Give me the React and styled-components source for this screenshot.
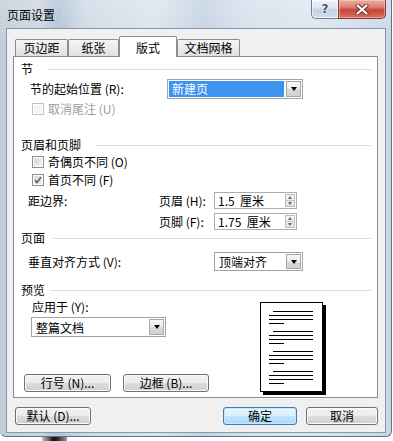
import styled, { createGlobalStyle } from 'styled-components';

const GlobalStyle = createGlobalStyle`
  html, body {
    margin: 0;
    padding: 0;
    background: #ffffff;
    overflow: hidden;
  }
  body {
    font-family: 'Noto Sans CJK SC', 'Noto Sans', sans-serif;
    font-size: 12px;
    color: #000;
  }
`;

const Window = styled.div`
  width: 392px;
  height: 437px;
  box-sizing: border-box;
  border-right: 1px solid #5f7288;
  border-bottom: 1px solid #5f7288;
  border-radius: 0 0 6px 6px;
  background:
    linear-gradient(180deg, rgba(255, 255, 255, 0.2) 0%, rgba(255, 255, 255, 0) 40px),
    linear-gradient(90deg, #c3cdd9 0%, #ccd6e2 10%, #b2c3d7 15%, #d0dbe7 22%, #dbe4ee 40%, #c4d2e2 52%, #d5e0ec 62%, #dde6f0 80%, #cad7e6 100%);
  display: flex;
  flex-direction: column;
  overflow: hidden;
`;

const TitleBar = styled.div`
  height: 28px;
  display: flex;
  justify-content: space-between;
  align-items: flex-start;
  padding-left: 7px;
`;

const Title = styled.div`
  margin-top: 8px;
  line-height: 14px;
  color: #000;
`;

const CaptionButtons = styled.div`
  display: flex;
  margin-right: 5px;
`;

const HelpButton = styled.div`
  box-sizing: border-box;
  width: 27px;
  height: 19px;
  border: 1px solid #6f8197;
  border-top: none;
  border-right: none;
  border-radius: 0 0 0 5px;
  background: linear-gradient(180deg, #eef3f9 0%, #dbe4ef 45%, #c5d2e2 55%, #d4dfec 100%);
  box-shadow: inset 0 0 0 1px rgba(255, 255, 255, 0.6);
  display: flex;
  align-items: center;
  justify-content: center;
  font-family: 'DejaVu Sans', sans-serif;
  font-weight: bold;
  font-size: 12px;
  color: #4a5568;
  text-shadow: 0 0 2px #fff, 0 0 1px #fff;
`;

const CloseButton = styled.div`
  box-sizing: border-box;
  width: 48px;
  height: 19px;
  border: 1px solid #7d3b33;
  border-top: none;
  border-radius: 0 0 5px 0;
  background: linear-gradient(180deg, #e9b2a6 0%, #d9806f 40%, #c64535 55%, #d7715f 100%);
  box-shadow: inset 0 0 0 1px rgba(255, 210, 200, 0.5);
  display: flex;
  align-items: center;
  justify-content: center;
`;

const Client = styled.div`
  box-sizing: border-box;
  margin-left: 6px;
  width: 380px;
  height: 405px;
  border: 1px solid #8799ae;
  background: #f0f0f0;
  padding: 7px 7px 0 6px;
  display: flex;
  flex-direction: column;
`;

const TabStrip = styled.div`
  display: flex;
  align-items: flex-end;
  height: 20px;
  padding-left: 2px;
`;

const Tab = styled.div`
  box-sizing: border-box;
  width: ${p => p.$w}px;
  height: ${p => (p.$active ? 21 : 17)}px;
  margin-bottom: ${p => (p.$active ? -1 : 0)}px;
  padding-top: ${p => (p.$active ? 2 : 0)}px;
  border: 1px solid #898c95;
  border-bottom: none;
  border-radius: 2px 2px 0 0;
  background: ${p => (p.$active ? '#ffffff' : 'linear-gradient(180deg, #f5f5f5 0%, #ebebeb 50%, #dfdfdf 100%)')};
  position: ${p => (p.$active ? 'relative' : 'static')};
  z-index: ${p => (p.$active ? 1 : 'auto')};
  display: flex;
  align-items: center;
  justify-content: center;
  line-height: 14px;
`;

const Panel = styled.div`
  box-sizing: border-box;
  height: 342px;
  border: 1px solid #898c95;
  background: #ffffff;
  padding: 5px 6px 0 7px;
  display: flex;
  flex-direction: column;
`;

const Heading = styled.div`
  display: flex;
  align-items: center;
  height: 14px;
  line-height: 14px;
  margin-top: ${p => p.$mt || 0}px;
`;

const Rule = styled.div`
  flex: 1;
  height: 1px;
  background: #d5dfe5;
  margin-left: ${p => p.$gap}px;
`;

const FieldRow = styled.div`
  display: flex;
  align-items: center;
  height: ${p => p.$h}px;
  margin-top: ${p => p.$mt || 0}px;
  padding-left: ${p => p.$pl || 0}px;
  line-height: 14px;
`;

const Label = styled.span`
  display: block;
  flex: 0 0 ${p => (p.$w ? `${p.$w}px` : 'auto')};
  height: 14px;
  line-height: 14px;
  color: ${p => (p.$disabled ? '#9d9d9d' : '#000')};
  white-space: nowrap;
`;

const CheckRow = styled.div`
  display: flex;
  align-items: center;
  height: ${p => p.$h || 15}px;
  margin-top: ${p => p.$mt || 0}px;
  padding-left: 11px;
`;

const CheckBox = styled.span`
  box-sizing: border-box;
  width: 12px;
  height: 12px;
  margin-right: 4px;
  border: 1px solid ${p => (p.$disabled ? '#c2c2c2' : '#8e8f8f')};
  background: ${p => (p.$disabled ? '#f4f4f4' : 'linear-gradient(135deg, #d6d6d6 0%, #f4f4f4 100%)')};
  box-shadow: inset 0 0 0 1px #ffffff;
  display: flex;
  align-items: center;
  justify-content: center;
`;

const SelectBox = styled.div`
  box-sizing: border-box;
  width: ${p => p.$w}px;
  height: ${p => p.$h}px;
  border: 1px solid #a3a3a3;
  background: #ffffff;
  padding: 1px;
  display: flex;
  align-items: stretch;
`;

const SelectValue = styled.div`
  flex: 1;
  margin-right: 2px;
  padding-left: 3px;
  display: flex;
  align-items: center;
  background: ${p => (p.$selected ? '#3d94f0' : 'transparent')};
  color: ${p => (p.$selected ? '#ffffff' : '#000')};
`;

const DropButton = styled.div`
  box-sizing: border-box;
  width: 15px;
  border: 1px solid #a7a7a7;
  background: linear-gradient(180deg, #f8f8f8 0%, #ececec 50%, #dadada 51%, #d0d0d0 100%);
  display: flex;
  align-items: center;
  justify-content: center;
`;

const DownArrow = styled.span`
  width: 0;
  height: 0;
  border-left: 3.5px solid transparent;
  border-right: 3.5px solid transparent;
  border-top: 4px solid #000;
`;

const MarginGrid = styled.div`
  display: grid;
  grid-template-columns: 131px 55px 83px;
  grid-auto-rows: 17px;
  row-gap: 4px;
  align-items: center;
  margin-top: 3px;
  padding-left: 7px;
  line-height: 14px;
`;

const SpinBox = styled.div`
  box-sizing: border-box;
  width: 83px;
  height: 17px;
  border: 1px solid #abadb3;
  background: #ffffff;
  padding: 1px;
  display: flex;
  align-items: stretch;
`;

const SpinText = styled.span`
  flex: 1;
  padding-left: 2px;
  display: flex;
  align-items: center;
  white-space: pre;
`;

const SpinButtons = styled.div`
  box-sizing: border-box;
  width: 10px;
  border: 1px solid #bdbdbd;
  background: linear-gradient(180deg, #f7f7f7 0%, #e3e3e3 100%);
  display: flex;
  flex-direction: column;
`;

const SpinHalf = styled.div`
  flex: 1;
  display: flex;
  align-items: center;
  justify-content: center;
  border-top: ${p => (p.$down ? '1px solid #c6c6c6' : 'none')};
`;

const SpinArrow = styled.span`
  width: 0;
  height: 0;
  border-left: 2.5px solid transparent;
  border-right: 2.5px solid transparent;
  border-bottom: ${p => (p.$down ? 'none' : '3px solid #6a6a6a')};
  border-top: ${p => (p.$down ? '3px solid #6a6a6a' : 'none')};
`;

const PreviewBody = styled.div`
  display: flex;
`;

const PreviewLeft = styled.div`
  flex: 0 0 239px;
  display: flex;
  flex-direction: column;
  align-items: flex-start;
`;

const ApplyLabel = styled.div`
  margin: 3px 0 0 11px;
  line-height: 14px;
`;

const SelectSlot = styled.div`
  margin: 3px 0 0 10px;
`;

const ActionRow = styled.div`
  display: flex;
  gap: 12px;
  margin: 37px 0 0 3px;
`;

const Button = styled.div`
  box-sizing: border-box;
  width: ${p => p.$w}px;
  height: 18px;
  border: 1px solid ${p => (p.$primary ? '#3c7fb1' : '#707070')};
  border-radius: 3px;
  background: ${p =>
    p.$primary
      ? 'linear-gradient(180deg, #eaf6fd 0%, #d9f0fc 50%, #bee6fd 51%, #a7d9f5 100%)'
      : 'linear-gradient(180deg, #f2f2f2 0%, #ebebeb 50%, #dddddd 51%, #cfcfcf 100%)'};
  box-shadow: inset 0 0 0 1px ${p => (p.$primary ? '#c5e7f9' : '#fbfbfb')};
  display: flex;
  align-items: center;
  justify-content: center;
  line-height: 14px;
  white-space: nowrap;
`;

const Page = styled.div`
  box-sizing: border-box;
  margin-top: 5px;
  width: 63px;
  height: 90px;
  border: 1px solid #000;
  background: #ffffff;
  box-shadow: 3px 3px 0 #000;
  padding: 8px 0 0 8px;
  display: flex;
  flex-direction: column;
  gap: 7px;
`;

const TextBlock = styled.div`
  display: flex;
  flex-direction: column;
  gap: 3px;
`;

const TextLine = styled.div`
  height: 1px;
  background: #000;
  width: ${p => p.$w}px;
  margin-left: ${p => p.$indent || 0}px;
`;

const BottomBar = styled.div`
  display: flex;
  justify-content: space-between;
  margin-top: 9px;
  padding-left: 2px;
`;

const ButtonGroup = styled.div`
  display: flex;
  gap: 9px;
`;

const Below = styled.div`
  height: 4px;
  padding-left: 42px;
`;

const Smudge = styled.div`
  width: 25px;
  height: 4px;
  background: linear-gradient(90deg, #c8c8c8 0%, #555 30%, #111 45%, #222 60%, #9a9a9a 100%);
`;

function Select({ w, h, value, selected }) {
  return (
    <SelectBox $w={w} $h={h}>
      <SelectValue $selected={selected}>{value}</SelectValue>
      <DropButton>
        <DownArrow />
      </DropButton>
    </SelectBox>
  );
}

function Spin({ value }) {
  return (
    <SpinBox>
      <SpinText>{value}</SpinText>
      <SpinButtons>
        <SpinHalf>
          <SpinArrow />
        </SpinHalf>
        <SpinHalf $down>
          <SpinArrow $down />
        </SpinHalf>
      </SpinButtons>
    </SpinBox>
  );
}

function Check({ checked, disabled, label }) {
  return (
    <>
      <CheckBox $disabled={disabled}>
        {checked && (
          <svg width="8" height="8" viewBox="0 0 8 8">
            <path d="M1 4.2 L3 6.4 L7 1.2" fill="none" stroke="#4b5f80" strokeWidth="1.6" />
          </svg>
        )}
      </CheckBox>
      <Label $disabled={disabled}>{label}</Label>
    </>
  );
}

function PreviewPage() {
  return (
    <Page>
      {[0, 1, 2, 3].map(i => (
        <TextBlock key={i}>
          <TextLine $w={40} $indent={4} />
          <TextLine $w={44} />
          <TextLine $w={44} />
          <TextLine $w={15} />
        </TextBlock>
      ))}
    </Page>
  );
}

export default function App() {
  return (
    <>
      <GlobalStyle />
      <Window>
        <TitleBar>
          <Title>页面设置</Title>
          <CaptionButtons>
            <HelpButton>?</HelpButton>
            <CloseButton>
              <svg width="14" height="11" viewBox="0 0 14 11">
                <path d="M2.5 1.5 L11.5 9.5 M11.5 1.5 L2.5 9.5" stroke="#6b2a24" strokeWidth="4" strokeLinecap="round" />
                <path d="M2.5 1.5 L11.5 9.5 M11.5 1.5 L2.5 9.5" stroke="#ffffff" strokeWidth="2.2" strokeLinecap="round" />
              </svg>
            </CloseButton>
          </CaptionButtons>
        </TitleBar>
        <Client>
          <TabStrip>
            <Tab $w={53}>页边距</Tab>
            <Tab $w={51}>纸张</Tab>
            <Tab $w={58} $active>版式</Tab>
            <Tab $w={63}>文档网格</Tab>
          </TabStrip>
          <Panel>
            <Heading>
              节<Rule $gap={14} />
            </Heading>
            <FieldRow $h={20} $mt={3} $pl={9}>
              <Label $w={137}>节的起始位置 (R):</Label>
              <Select w={136} h={20} value="新建页" selected />
            </FieldRow>
            <CheckRow $mt={2}>
              <Check disabled label="取消尾注 (U)" />
            </CheckRow>

            <Heading $mt={22}>
              页眉和页脚<Rule $gap={15} />
            </Heading>
            <CheckRow $mt={1} $h={18}>
              <Check label="奇偶页不同 (O)" />
            </CheckRow>
            <CheckRow $h={18}>
              <Check checked label="首页不同 (F)" />
            </CheckRow>
            <MarginGrid>
              <span>距边界:</span>
              <span>页眉 (H):</span>
              <Spin value="1.5  厘米" />
              <span />
              <span>页脚 (F):</span>
              <Spin value="1.75  厘米" />
            </MarginGrid>

            <Heading $mt={1}>
              页面<Rule $gap={8} />
            </Heading>
            <FieldRow $h={19} $mt={7} $pl={7}>
              <Label $w={186}>垂直对齐方式 (V):</Label>
              <Select w={89} h={19} value="顶端对齐" />
            </FieldRow>

            <Heading $mt={12}>
              预览<Rule $gap={5} />
            </Heading>
            <PreviewBody>
              <PreviewLeft>
                <ApplyLabel>应用于 (Y):</ApplyLabel>
                <SelectSlot>
                  <Select w={135} h={20} value="整篇文档" />
                </SelectSlot>
                <ActionRow>
                  <Button $w={87}>行号 (N)...</Button>
                  <Button $w={86}>边框 (B)...</Button>
                </ActionRow>
              </PreviewLeft>
              <PreviewPage />
            </PreviewBody>
          </Panel>
          <BottomBar>
            <Button $w={76}>默认 (D)...</Button>
            <ButtonGroup>
              <Button $w={74} $primary>确定</Button>
              <Button $w={72}>取消</Button>
            </ButtonGroup>
          </BottomBar>
        </Client>
      </Window>
      <Below>
        <Smudge />
      </Below>
    </>
  );
}
